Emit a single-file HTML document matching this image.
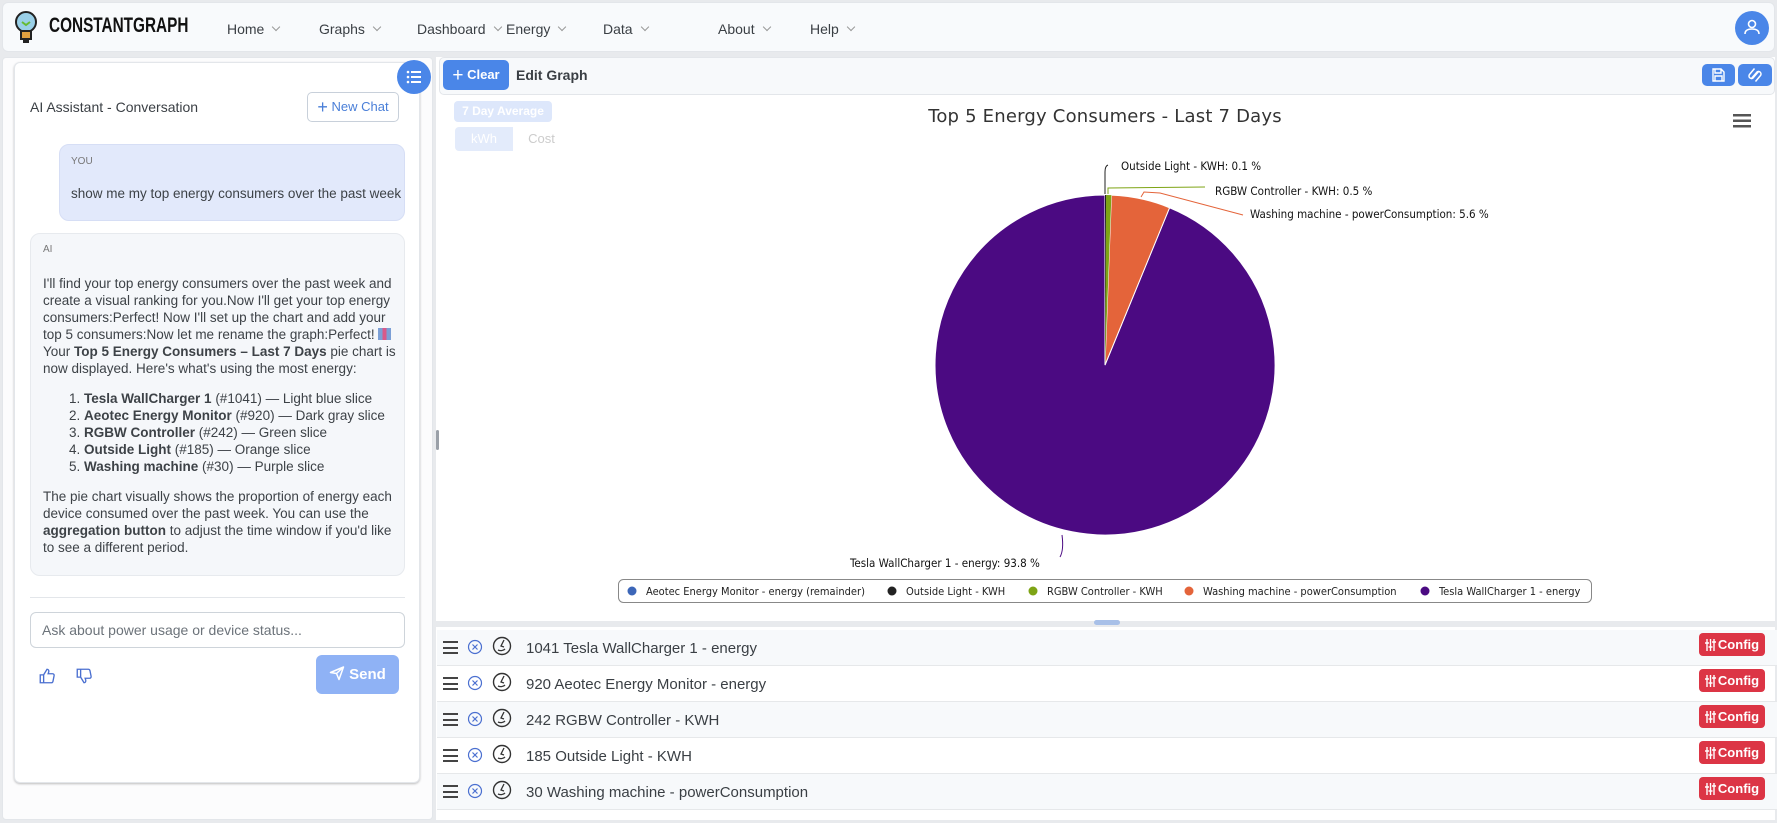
<!DOCTYPE html>
<html><head><meta charset="utf-8"><style>
*{box-sizing:border-box;margin:0;padding:0}
body{width:1777px;height:823px;overflow:hidden;background:#e8eaed;font-family:"Liberation Sans",sans-serif;color:#212529;position:relative}
.abs{position:absolute}
.nav{left:2px;top:2px;width:1773px;height:50px;background:#f8fafc;border:1px solid #e3e6ea;border-radius:6px}
.nav .item{position:absolute;top:18px;font-size:14px;color:#3a3f44}
.nav .item:after{content:"";display:inline-block;width:5px;height:5px;border-right:1px solid #999;border-bottom:1px solid #999;transform:rotate(45deg);margin-left:9px;position:relative;top:-4px}
.left{left:2px;top:57px;width:431px;height:763px;background:#fcfcfd;border:1px solid #e3e6ea;border-radius:4px}
.card{left:14px;top:62px;width:406px;height:721px;background:#fff;border:1px solid #e3e6ea;border-radius:6px;box-shadow:0 1px 2px rgba(0,0,0,.25)}
.right{left:436px;top:57px;width:1339px;height:763px;background:#fff}
.txt{font-size:13.5px;line-height:17px;color:#3d4247}
.rows .row{position:absolute;left:437px;width:1340px;height:36px;border-bottom:1px solid #e6e8ea}
.row .name{position:absolute;left:89px;top:10px;font-size:15px;color:#3a3f44}
.cfg{position:absolute;left:1262px;top:3px;width:66px;height:23px;background:#dc3545;border-radius:4px;color:#fff;font-size:13px;font-weight:bold;line-height:23px;text-align:center}
.cfg svg{vertical-align:-2px;margin-right:2px}
</style></head><body>

<div class="abs nav">
  <svg class="abs" style="left:10px;top:7px" width="26" height="36" viewBox="0 0 26 36"><circle cx="13" cy="12" r="10" fill="#9ad0e8" stroke="#222" stroke-width="2"/><rect x="8" y="21" width="10" height="8" fill="#e0a040" stroke="#222" stroke-width="2"/><path d="M9 12l4 3 4-3" stroke="#6b3" stroke-width="2" fill="none"/><rect x="10" y="29" width="6" height="4" fill="#222"/></svg>
  <div class="abs" style="left:46px;top:11px;font-size:21px;font-weight:900;color:#111;transform:scaleX(0.73);transform-origin:left top;white-space:nowrap">CONSTANTGRAPH</div>
  <div class="item" style="left:224px">Home</div>
  <div class="item" style="left:316px">Graphs</div>
  <div class="item" style="left:414px">Dashboard</div>
  <div class="item" style="left:503px">Energy</div>
  <div class="item" style="left:600px">Data</div>
  <div class="item" style="left:715px">About</div>
  <div class="item" style="left:807px">Help</div>
  <div class="abs" style="left:1732px;top:8px;width:34px;height:34px;border-radius:50%;background:#4a86e8"><svg width="34" height="34"><circle cx="17" cy="13" r="3.5" fill="none" stroke="#fff" stroke-width="1.6"/><path d="M10 23c0-4 3-5 7-5s7 1 7 5" fill="none" stroke="#fff" stroke-width="1.6"/></svg></div>
</div>

<div class="abs left"></div>
<div class="abs card"></div>
<div class="abs" style="left:397px;top:60px;width:34px;height:34px;border-radius:50%;background:#4a86e8"><svg width="34" height="34"><g fill="#fff"><circle cx="11" cy="12" r="1.3"/><circle cx="11" cy="17" r="1.3"/><circle cx="11" cy="22" r="1.3"/><rect x="14" y="11" width="10" height="2"/><rect x="14" y="16" width="10" height="2"/><rect x="14" y="21" width="10" height="2"/></g></svg></div>
<div class="abs" style="left:30px;top:99px;font-size:14px;color:#3a3f44">AI Assistant - Conversation</div>
<div class="abs" style="left:307px;top:92px;width:92px;height:30px;border:1px solid #c8d0da;border-radius:5px;font-size:13px;color:#4a7fd8;line-height:28px;text-align:center"><span style="font-size:18px;vertical-align:-2px">+</span> New Chat</div>

<div class="abs" style="left:59px;top:144px;width:346px;height:77px;background:#e2e9fb;border:1px solid #d6def5;border-radius:10px">
  <div class="abs" style="left:11px;top:11px;font-size:10px;color:#777">YOU</div>
  <div class="abs txt" style="left:11px;top:40px;white-space:nowrap">show me my top energy consumers over the past week</div>
</div>
<div class="abs" style="left:30px;top:233px;width:375px;height:343px;background:#f5f7fa;border:1px solid #e7eaee;border-radius:10px">
  <div class="abs" style="left:12px;top:10px;font-size:10px;color:#777">AI</div>
  <div class="abs txt" style="left:12px;top:41px;width:360px">I'll find your top energy consumers over the past week and create a visual ranking for you.Now I'll get your top energy consumers:Perfect! Now I'll set up the chart and add your top 5 consumers:Now let me rename the graph:Perfect! <span style="display:inline-block;width:13px;height:12px;background:linear-gradient(90deg,#7b9fd6 33%,#d85a8a 33% 66%,#7b9fd6 66%);vertical-align:-1px"></span> Your <b>Top 5 Energy Consumers – Last 7 Days</b> pie chart is now displayed. Here's what's using the most energy:
  <div style="margin:13px 0 13px 26px">1. <b>Tesla WallCharger 1</b> (#1041) — Light blue slice<br>2. <b>Aeotec Energy Monitor</b> (#920) — Dark gray slice<br>3. <b>RGBW Controller</b> (#242) — Green slice<br>4. <b>Outside Light</b> (#185) — Orange slice<br>5. <b>Washing machine</b> (#30) — Purple slice</div>
  The pie chart visually shows the proportion of energy each device consumed over the past week. You can use the <b>aggregation button</b> to adjust the time window if you'd like to see a different period.</div>
</div>
<div class="abs" style="left:30px;top:597px;width:375px;height:1px;background:#e3e6ea"></div>
<div class="abs" style="left:30px;top:612px;width:375px;height:36px;border:1px solid #ced4da;border-radius:6px;font-size:14px;color:#6c737a;padding:9px 11px">Ask about power usage or device status...</div>
<svg class="abs" style="left:38px;top:667px" width="18" height="18" viewBox="0 0 16 16"><path d="M2 7h3v7H2zM5 7l3-5c1 0 2 1 1.5 2.5L9 6h4c1 0 1.5 1 1.3 1.8l-1 5c-.2.7-.7 1.2-1.4 1.2H5" fill="none" stroke="#4a6fd0" stroke-width="1.2"/></svg>
<svg class="abs" style="left:75px;top:667px" width="18" height="18" viewBox="0 0 16 16"><path d="M2 2h3v7H2zM5 9l3 5c1 0 2-1 1.5-2.5L9 10h4c1 0 1.5-1 1.3-1.8l-1-5C13.1 2.5 12.6 2 11.9 2H5" fill="none" stroke="#4a6fd0" stroke-width="1.2"/></svg>
<div class="abs" style="left:316px;top:655px;width:83px;height:39px;background:#8fb2f5;border-radius:6px;color:#fff;font-size:15px;font-weight:bold;line-height:39px;text-align:center"><svg width="16" height="16" viewBox="0 0 16 16" style="vertical-align:-2px;margin-right:4px"><path d="M1.5 7.5L14.5 2 10 14.5 7.5 8.5z M7.5 8.5L14.5 2" fill="none" stroke="#fff" stroke-width="1.5" stroke-linejoin="round"/></svg>Send</div>

<div class="abs right"></div>
<div class="abs" style="left:436px;top:430px;width:3px;height:20px;background:#9aa0a8;border-radius:2px"></div>
<div class="abs" style="left:439px;top:57px;width:1336px;height:38px;background:#f7f9fb;border:1px solid #e3e6ea;border-radius:5px"></div>
<div class="abs" style="left:443px;top:60px;width:66px;height:30px;background:#4a86e8;border-radius:5px;color:#fff;font-size:13px;font-weight:bold;line-height:30px;text-align:center"><span style="font-size:19px;font-weight:normal;vertical-align:-2px">+</span> Clear</div>
<div class="abs" style="left:516px;top:67px;font-size:14px;font-weight:bold;color:#3a3f44">Edit Graph</div>
<div class="abs" style="left:1702px;top:64px;width:33px;height:22px;background:#4a86e8;border-radius:5px"><svg width="33" height="22"><path d="M11 5h8l3 3v9H11z M13 5v4h6V5 M13 17v-5h7v5" fill="none" stroke="#fff" stroke-width="1.4"/></svg></div>
<div class="abs" style="left:1738px;top:64px;width:34px;height:22px;background:#4a86e8;border-radius:5px"><svg width="34" height="22"><path d="M13 15l6-7a2.5 2.5 0 0 1 3.5 3.5l-5 6M21 7l-6 7a2.5 2.5 0 0 1-3.5-3.5l5-6" fill="none" stroke="#fff" stroke-width="1.5"/></svg></div>

<div class="abs" style="left:454px;top:101px;width:98px;height:21px;background:#dde7fb;border-radius:4px;color:#fff;font-size:12px;font-weight:bold;line-height:21px;text-align:center">7 Day Average</div>
<div class="abs" style="left:455px;top:127px;width:58px;height:24px;background:#e3ebfb;border-radius:4px 0 0 4px;color:#fff;font-size:13px;line-height:24px;text-align:center">kWh</div>
<div class="abs" style="left:513px;top:127px;width:57px;height:24px;color:#ccc;font-size:13px;line-height:24px;text-align:center">Cost</div>

<div class="abs" style="left:0;top:106px;width:2210px;text-align:center;font-size:18px;color:#333;font-family:'DejaVu Sans','Liberation Sans',sans-serif;letter-spacing:.2px">Top 5 Energy Consumers - Last 7 Days</div>
<svg class="abs" style="left:1733px;top:113px" width="18" height="16"><g fill="#555"><rect y="1" width="18" height="2.5"/><rect y="6.5" width="18" height="2.5"/><rect y="12" width="18" height="2.5"/></g></svg>

<svg class="abs" style="left:0;top:0" width="1777" height="823">
  <path d="M1105 365 L1169.56 207.73 A170 170 0 1 1 1105 195 Z" fill="#4b0a82" stroke="#fff" stroke-width="1"/>
  <path d="M1105 365 L1111.41 195.12 A170 170 0 0 1 1169.56 207.73 Z" fill="#e4643a" stroke="#fff" stroke-width="1"/>
  <path d="M1105 365 L1106.07 195 A170 170 0 0 1 1111.41 195.12 Z" fill="#7ea415"/>
  <path d="M1105 195 L1106.07 195 L1105 365Z" fill="#222"/>
  <g fill="none" stroke-width="1">
    <path d="M1105 194 L1105 172 Q1105 166 1108 165" stroke="#222"/>
    <path d="M1108 194 L1108 188 L1205 187" stroke="#7ea415"/>
    <path d="M1141 197 L1144 192 L1160 193 L1243 215" stroke="#e4643a"/>
    <path d="M1062 535 Q1064 550 1060 557" stroke="#4b0a82"/>
  </g>
  <g font-family="'DejaVu Sans Condensed','Liberation Sans',sans-serif" font-size="11.5" fill="#111">
    <text x="1121" y="170">Outside Light - KWH: 0.1 %</text>
    <text x="1215" y="195">RGBW Controller - KWH: 0.5 %</text>
    <text x="1250" y="218">Washing machine - powerConsumption: 5.6 %</text>
    <text x="850" y="567">Tesla WallCharger 1 - energy: 93.8 %</text>
  </g>
  <rect x="618.5" y="579.5" width="973" height="23" rx="5" fill="#fff" stroke="#888"/>
  <g font-family="'DejaVu Sans Condensed','Liberation Sans',sans-serif" font-size="11" fill="#222">
    <circle cx="632" cy="591" r="4.5" fill="#3c66b8"/><text x="646" y="595">Aeotec Energy Monitor - energy (remainder)</text>
    <circle cx="892" cy="591" r="4.5" fill="#222"/><text x="906" y="595">Outside Light - KWH</text>
    <circle cx="1033" cy="591" r="4.5" fill="#7ea415"/><text x="1047" y="595">RGBW Controller - KWH</text>
    <circle cx="1189" cy="591" r="4.5" fill="#e4643a"/><text x="1203" y="595">Washing machine - powerConsumption</text>
    <circle cx="1425" cy="591" r="4.5" fill="#4b0a82"/><text x="1439" y="595">Tesla WallCharger 1 - energy</text>
  </g>
</svg>

<div class="abs" style="left:436px;top:621px;width:1341px;height:6px;background:#e8eaed"></div>
<div class="abs" style="left:1094px;top:620px;width:26px;height:5px;background:#a8c0e8;border-radius:3px"></div>

<div class="rows">
<div class="row" style="top:630px;background:#f7f9fb">
<div class="abs" style="left:6px;top:11px;width:15px;height:13px;border-top:2px solid #444;border-bottom:2px solid #444"><div style="margin-top:3.5px;height:2px;background:#444"></div></div>
<svg class="abs" style="left:30px;top:9px" width="16" height="16"><circle cx="8" cy="8" r="6.5" fill="none" stroke="#4a6fd0" stroke-width="1.2"/><path d="M5.5 5.5l5 5M10.5 5.5l-5 5" stroke="#4a6fd0" stroke-width="1.2"/></svg>
<svg class="abs" style="left:55px;top:6px" width="20" height="20"><circle cx="10" cy="10" r="8.5" fill="none" stroke="#333" stroke-width="1.4"/><path d="M12 4l-3 6 3 1M6 14c2 1 5 1 7-1" fill="none" stroke="#333" stroke-width="1.3"/></svg>
<div class="name">1041 Tesla WallCharger 1 - energy</div><div class="cfg"><svg width="11" height="12"><path d="M2 0v12M5.5 0v12M9 0v12M0 4h4M3.5 8h4M7 3h4" stroke="#fff" stroke-width="1.4"/></svg>Config</div></div>
<div class="row" style="top:666px">
<div class="abs" style="left:6px;top:11px;width:15px;height:13px;border-top:2px solid #444;border-bottom:2px solid #444"><div style="margin-top:3.5px;height:2px;background:#444"></div></div>
<svg class="abs" style="left:30px;top:9px" width="16" height="16"><circle cx="8" cy="8" r="6.5" fill="none" stroke="#4a6fd0" stroke-width="1.2"/><path d="M5.5 5.5l5 5M10.5 5.5l-5 5" stroke="#4a6fd0" stroke-width="1.2"/></svg>
<svg class="abs" style="left:55px;top:6px" width="20" height="20"><circle cx="10" cy="10" r="8.5" fill="none" stroke="#333" stroke-width="1.4"/><path d="M12 4l-3 6 3 1M6 14c2 1 5 1 7-1" fill="none" stroke="#333" stroke-width="1.3"/></svg>
<div class="name">920 Aeotec Energy Monitor - energy</div><div class="cfg"><svg width="11" height="12"><path d="M2 0v12M5.5 0v12M9 0v12M0 4h4M3.5 8h4M7 3h4" stroke="#fff" stroke-width="1.4"/></svg>Config</div></div>
<div class="row" style="top:702px;background:#f7f9fb">
<div class="abs" style="left:6px;top:11px;width:15px;height:13px;border-top:2px solid #444;border-bottom:2px solid #444"><div style="margin-top:3.5px;height:2px;background:#444"></div></div>
<svg class="abs" style="left:30px;top:9px" width="16" height="16"><circle cx="8" cy="8" r="6.5" fill="none" stroke="#4a6fd0" stroke-width="1.2"/><path d="M5.5 5.5l5 5M10.5 5.5l-5 5" stroke="#4a6fd0" stroke-width="1.2"/></svg>
<svg class="abs" style="left:55px;top:6px" width="20" height="20"><circle cx="10" cy="10" r="8.5" fill="none" stroke="#333" stroke-width="1.4"/><path d="M12 4l-3 6 3 1M6 14c2 1 5 1 7-1" fill="none" stroke="#333" stroke-width="1.3"/></svg>
<div class="name">242 RGBW Controller - KWH</div><div class="cfg"><svg width="11" height="12"><path d="M2 0v12M5.5 0v12M9 0v12M0 4h4M3.5 8h4M7 3h4" stroke="#fff" stroke-width="1.4"/></svg>Config</div></div>
<div class="row" style="top:738px">
<div class="abs" style="left:6px;top:11px;width:15px;height:13px;border-top:2px solid #444;border-bottom:2px solid #444"><div style="margin-top:3.5px;height:2px;background:#444"></div></div>
<svg class="abs" style="left:30px;top:9px" width="16" height="16"><circle cx="8" cy="8" r="6.5" fill="none" stroke="#4a6fd0" stroke-width="1.2"/><path d="M5.5 5.5l5 5M10.5 5.5l-5 5" stroke="#4a6fd0" stroke-width="1.2"/></svg>
<svg class="abs" style="left:55px;top:6px" width="20" height="20"><circle cx="10" cy="10" r="8.5" fill="none" stroke="#333" stroke-width="1.4"/><path d="M12 4l-3 6 3 1M6 14c2 1 5 1 7-1" fill="none" stroke="#333" stroke-width="1.3"/></svg>
<div class="name">185 Outside Light - KWH</div><div class="cfg"><svg width="11" height="12"><path d="M2 0v12M5.5 0v12M9 0v12M0 4h4M3.5 8h4M7 3h4" stroke="#fff" stroke-width="1.4"/></svg>Config</div></div>
<div class="row" style="top:774px;background:#f7f9fb">
<div class="abs" style="left:6px;top:11px;width:15px;height:13px;border-top:2px solid #444;border-bottom:2px solid #444"><div style="margin-top:3.5px;height:2px;background:#444"></div></div>
<svg class="abs" style="left:30px;top:9px" width="16" height="16"><circle cx="8" cy="8" r="6.5" fill="none" stroke="#4a6fd0" stroke-width="1.2"/><path d="M5.5 5.5l5 5M10.5 5.5l-5 5" stroke="#4a6fd0" stroke-width="1.2"/></svg>
<svg class="abs" style="left:55px;top:6px" width="20" height="20"><circle cx="10" cy="10" r="8.5" fill="none" stroke="#333" stroke-width="1.4"/><path d="M12 4l-3 6 3 1M6 14c2 1 5 1 7-1" fill="none" stroke="#333" stroke-width="1.3"/></svg>
<div class="name">30 Washing machine - powerConsumption</div><div class="cfg"><svg width="11" height="12"><path d="M2 0v12M5.5 0v12M9 0v12M0 4h4M3.5 8h4M7 3h4" stroke="#fff" stroke-width="1.4"/></svg>Config</div></div>
</div>
</body></html>
